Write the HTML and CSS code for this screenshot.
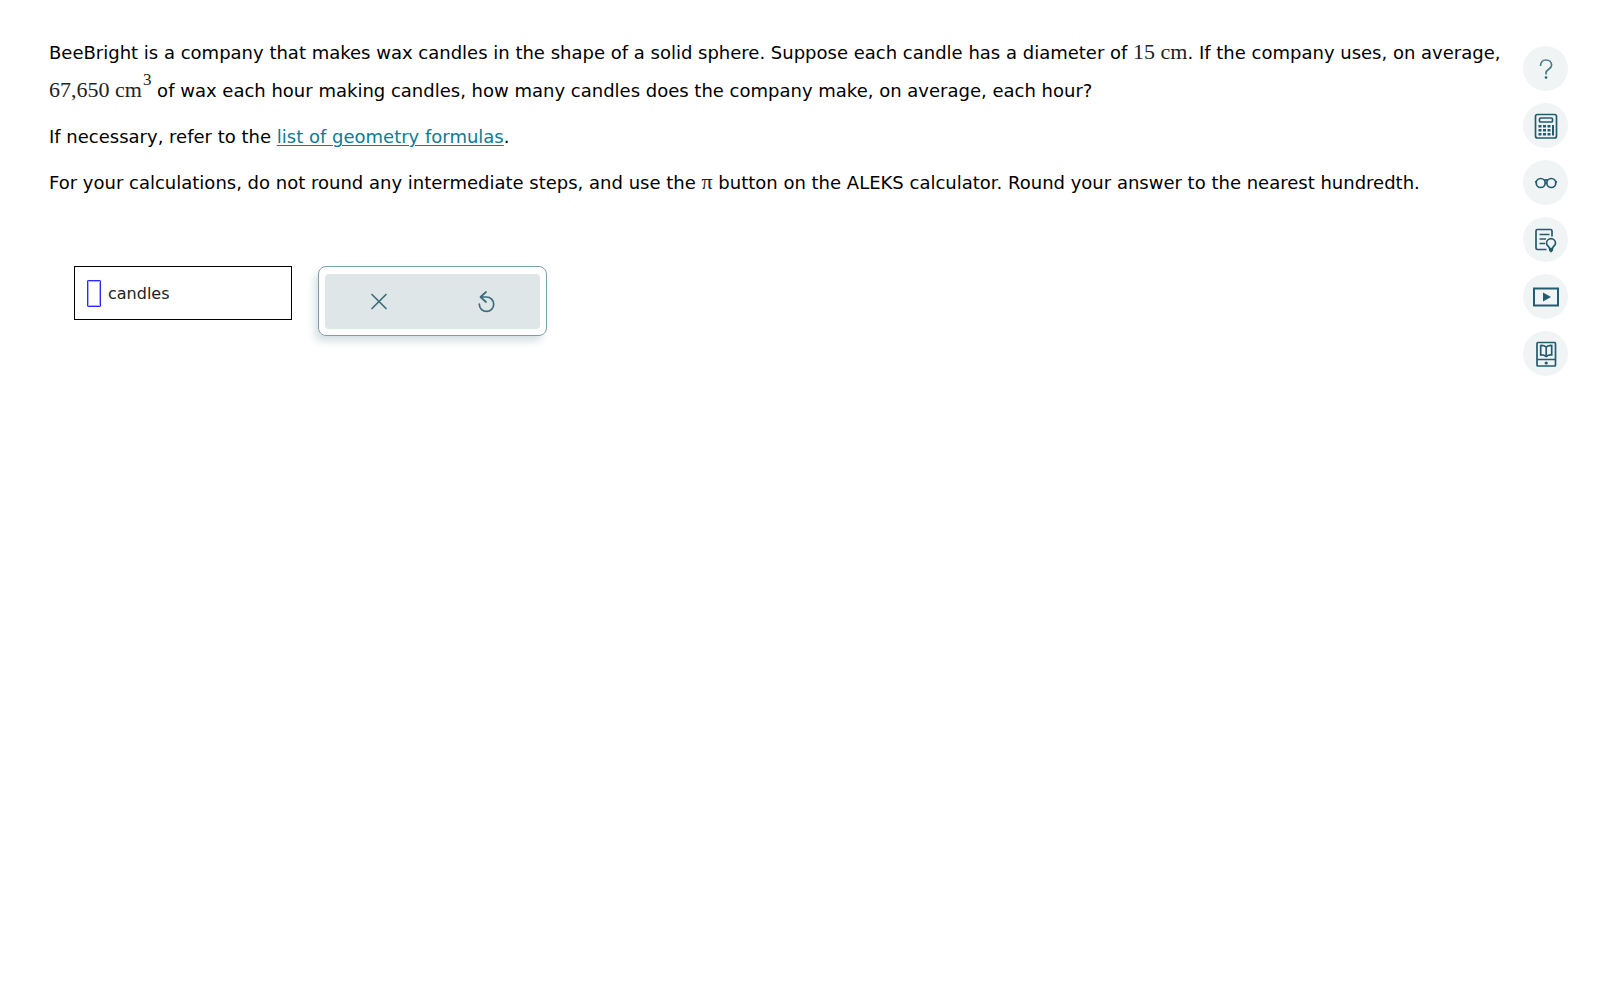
FILE: index.html
```html
<!DOCTYPE html>
<html lang="en">
<head>
  <meta charset="UTF-8" />
  <meta name="viewport" content="width=device-width, initial-scale=1.0" />
  <title>ALEKS</title>
  <link rel="stylesheet" href="styles.css">
</head>
<body>
  <div class="page">
    <main class="question">
      <p>BeeBright is a company that makes wax candles in the shape of a solid sphere. Suppose each candle has a diameter of <span class="math">15 cm</span>. If the company uses, on average, <span class="math">67,650 cm<sup>3</sup></span> of wax each hour making candles, how many candles does the company make, on average, each hour?</p>
      <p>If necessary, refer to the <a href="#">list of geometry formulas</a>.</p>
      <p>For your calculations, do not round any intermediate steps, and use the <span class="math">π</span> button on the ALEKS calculator. Round your answer to the nearest hundredth.</p>

      <div class="answer-row">
        <div class="answer-box">
          <input type="text" id="answer" class="answer-input">
          <label for="answer">candles</label>
        </div>
        <div class="keypad">
          <div class="keypad-inner">
            <button type="button" class="key" aria-label="Clear">
              <svg width="24" height="24" viewBox="0 0 24 24"><path d="M5 4.500l14 14M19 4.500L5 18.500"/></svg>
            </button>
            <button type="button" class="key" aria-label="Undo">
              <svg width="24" height="24" viewBox="0 0 24 24"><path d="M12 2L6.500 7l5.500 5M6.500 7H12.500a7.200 7.200 0 1 1-7.200 7.200"/></svg>
            </button>
          </div>
        </div>
      </div>
    </main>

    <nav class="tools">
      <button type="button" class="tool" aria-label="Help">
        <svg width="30" height="30" viewBox="0 0 30 30"><path class="thin" d="M9.500 12c0-3.500 2.300-6 5.500-6s5.600 2.200 5.600 5.300c0 3.700-5.600 4.200-5.600 7.500v1.700"/><circle class="fill" cx="15" cy="23.500" r="1.300"/></svg>
      </button>
      <button type="button" class="tool" aria-label="Calculator">
        <svg width="30" height="30" viewBox="0 0 30 30">
          <rect x="4.500" y="3.500" width="21" height="23.500" rx="2"/>
          <rect x="8.500" y="7" width="13" height="4" rx="1"/>
          <path class="fill" d="M7.500 14h3v2.500h-3zM12 14h3v2.500h-3zM16.500 14h3v2.500h-3zM7.500 18h3v2.500h-3zM12 18h3v2.500h-3zM16.500 18h3v2.500h-3zM7.500 22h3v2.500h-3zM12 22h3v2.500h-3zM16.500 22h3v2.500h-3zM21 14h2v10.500h-2z"/>
        </svg>
      </button>
      <button type="button" class="tool" aria-label="Reading view">
        <svg width="30" height="30" viewBox="0 0 30 30"><circle cx="9.700" cy="15" r="4.500"/><circle cx="20.300" cy="15" r="4.500"/><path d="M13.300 12.500q1.700-1.200 3.400 0M4 14l1.800-.5M26 14l-1.800-.5"/></svg>
      </button>
      <button type="button" class="tool" aria-label="Explanation">
        <svg width="30" height="30" viewBox="0 0 30 30">
          <path d="M15.500 24.500H6.500q-1.500 0-1.500-1.500V6q0-1.500 1.500-1.500h13q1.500 0 1.500 1.500v5.500M8.500 9.500h10M8.500 14h6.500M8.500 18.500h5.500"/>
          <path d="M18.500 23.500c0-2-3-2.800-3-5.300a4.500 4.500 0 0 1 9 0c0 2.500-3 3.300-3 5.300z"/>
          <path class="fill" d="M18 23.500h4v2l-2 2.300-2-2.300z"/>
        </svg>
      </button>
      <button type="button" class="tool" aria-label="Video">
        <svg width="36" height="30" viewBox="0 0 36 30"><rect class="thick" x="6" y="6.500" width="24" height="17"/><path class="fill" d="M15 10.500l8 4.500-8 4.500z"/></svg>
      </button>
      <button type="button" class="tool" aria-label="Textbook">
        <svg width="30" height="30" viewBox="0 0 30 30">
          <rect x="6" y="3.500" width="18.500" height="23.500" rx="1"/>
          <path d="M6 20.500h18.500M15.200 8q-2.500-1.800-5.500-1.500v9.500q3-.3 5.500 1.500q2.500-1.800 5.500-1.500V6.500q-3-.3-5.500 1.500zM15.200 8v9"/>
          <circle class="fill" cx="15.200" cy="24" r="1.600"/>
        </svg>
      </button>
    </nav>
  </div>
</body>
</html>
```
FILE: styles.css
```css
* {
  box-sizing: border-box;
}
body {
  margin: 0;
  background-color: #fff;
  font-family: Verdana, 'DejaVu Sans', sans-serif;
  font-size: 18px;
  color: #000;
}
button {
  border: none;
  padding: 0;
  cursor: pointer;
}
svg {
  flex: none;
  fill: none;
  stroke: #225c6e;
  stroke-width: 1.7;
}
.page {
  display: flex;
  align-items: flex-start;
  justify-content: space-between;
  gap: 20px;
  padding: 34px 31px 40px 49px;
}
.question {
  flex: 1;
}
.question p {
  margin: 0 0 8px;
  line-height: 38px;
}
.question a {
  color: #0d7c92;
  text-decoration-thickness: 1px;
  text-underline-offset: 2px;
}
.math {
  font-family: 'Liberation Serif', 'Times New Roman', serif;
  font-size: 22px;
  line-height: 1;
  white-space: nowrap;
  color: #222;
}
.math sup {
  margin-left: 1px;
  font-size: 17px;
  line-height: 0;
  vertical-align: 12px;
}
.answer-row {
  display: flex;
  align-items: flex-start;
  gap: 26px;
  padding: 56px 0 0 25px;
}
.answer-box {
  display: flex;
  align-items: center;
  gap: 7px;
  width: 218px;
  height: 54px;
  padding: 0 12px;
  border: 1px solid #000;
  font-size: 16px;
  color: #222;
}
.answer-input {
  width: 14px;
  height: 27px;
  padding: 0;
  border: 1px solid #2b2bff;
  border-radius: 1px;
  outline: 1px solid rgba(43, 43, 255, 0.4);
  outline-offset: -2px;
}
.keypad {
  width: 229px;
  padding: 7px 6px 6px;
  border: 1px solid #7d9fab;
  border-radius: 8px;
  box-shadow: -4px 6px 8px -1px rgba(34, 92, 110, 0.2);
}
.keypad-inner {
  display: flex;
  height: 55px;
  border-radius: 4px;
  background-color: #dfe6e8;
}
.key {
  flex: 1;
  display: flex;
  align-items: center;
  justify-content: center;
  background: none;
}
.key svg {
  stroke: #3e6c7c;
  stroke-linecap: round;
  stroke-linejoin: round;
}
.tools {
  display: flex;
  flex-direction: column;
  gap: 12px;
  padding-top: 12px;
}
.tool {
  display: flex;
  align-items: center;
  justify-content: center;
  width: 45px;
  height: 45px;
  border-radius: 50%;
  background-color: #f0f4f5;
}
.tool .thin {
  stroke: #4b7b8a;
}
.tool .thick {
  stroke-width: 2;
}
.tool .fill {
  fill: #225c6e;
  stroke: none;
}
```
